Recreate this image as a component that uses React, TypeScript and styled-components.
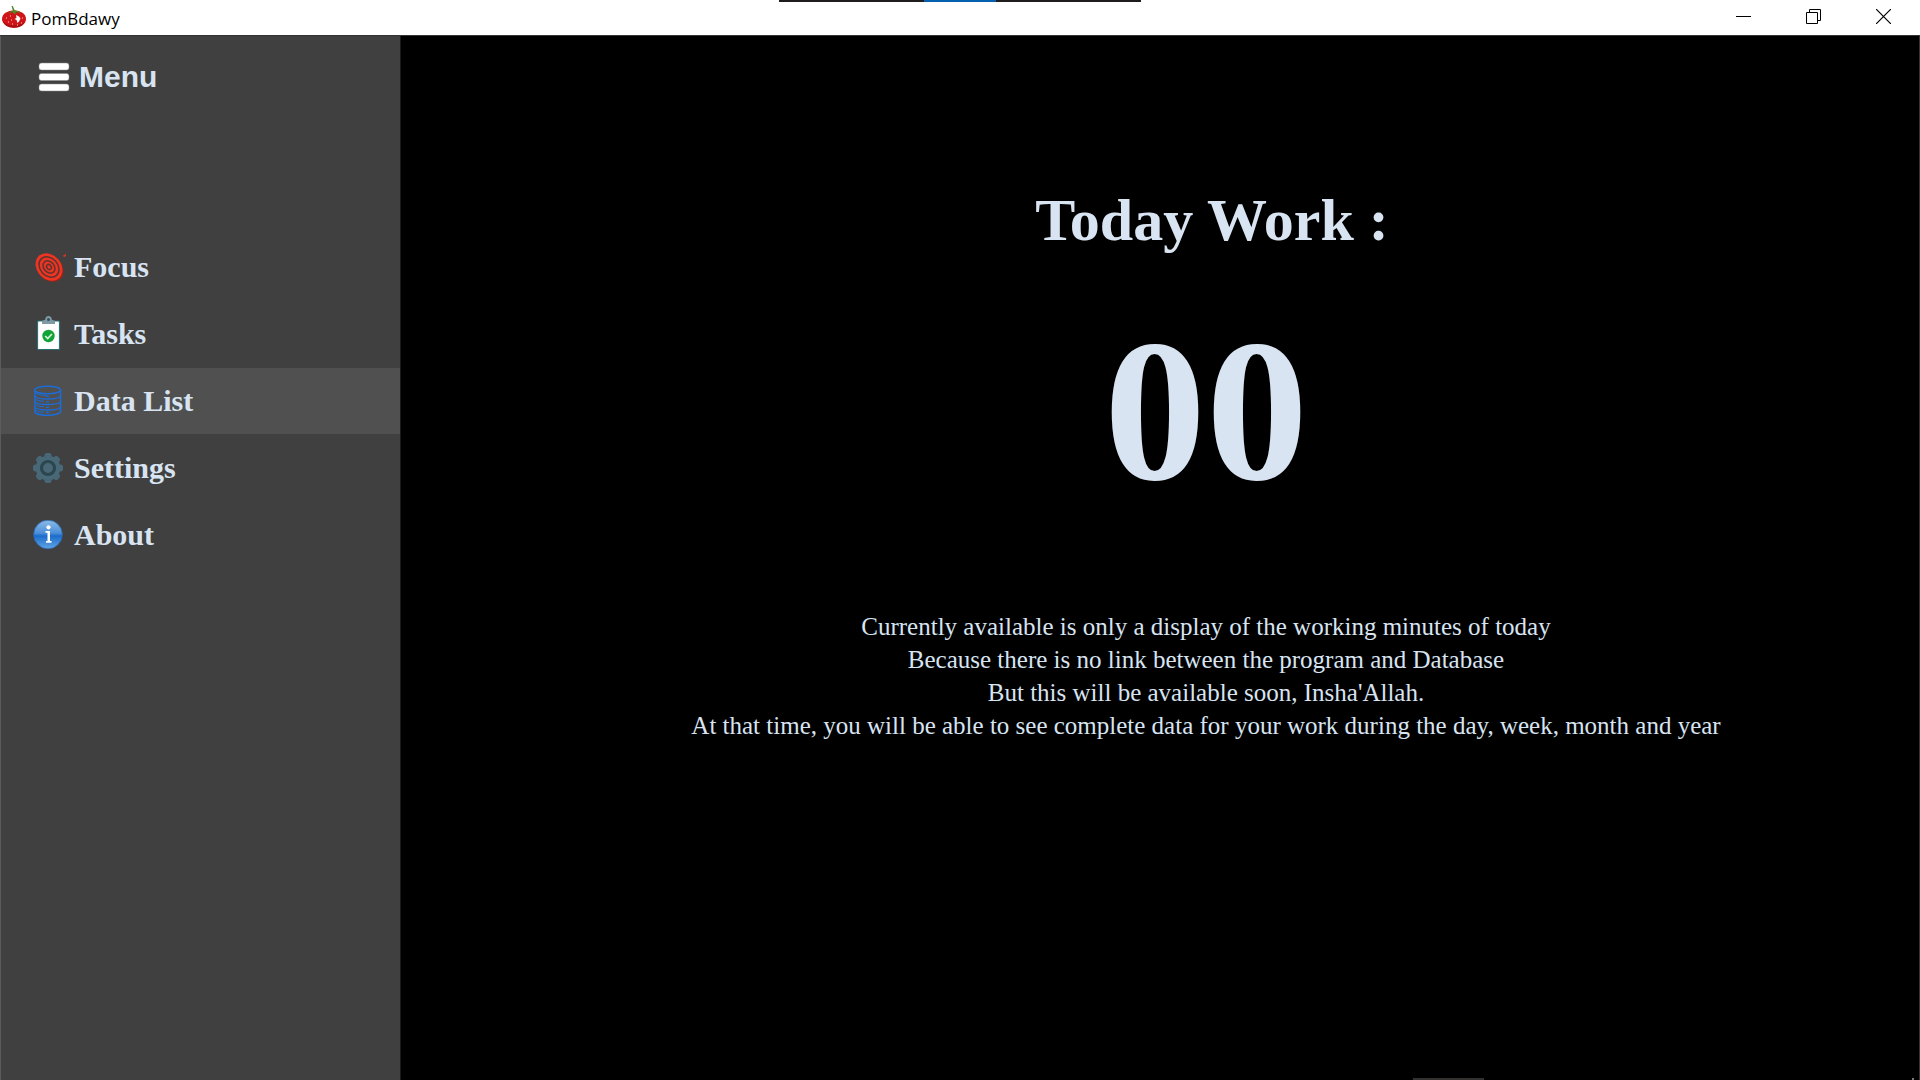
import React, { useState } from 'react';
import styled, { createGlobalStyle } from 'styled-components';

const serif = `"Palatino Linotype", Palatino, "Liberation Serif", serif`;
const ink = '#d8e4f1';

const GlobalStyle = createGlobalStyle`
  * { box-sizing: border-box; }
  body { margin: 0; background: #000; }
`;

const AppWindow = styled.div`
  position: relative;
  display: flex;
  flex-direction: column;
  min-height: 100vh;
  overflow: hidden;
  color: ${ink};
`;

const PlainButton = styled.button`
  display: flex;
  align-items: center;
  padding: 0;
  border: 0;
  background: none;
  color: inherit;
  cursor: pointer;
`;

const TitleBar = styled.header`
  display: flex;
  align-items: center;
  height: 35px;
  padding: 0 2px;
  background: #fff;
  color: #000;
`;

const AppName = styled.h1`
  flex: 1;
  margin: 0;
  padding: 2px 0 0 5px;
  font: 400 17px/32px "Segoe UI", "Open Sans", sans-serif;
`;

const WindowControl = styled(PlainButton)`
  justify-content: center;
  width: 70px;
  height: 33px;
  align-self: flex-start;
`;

const ScreenBar = styled.div`
  position: absolute;
  top: 0;
  left: 50%;
  display: flex;
  justify-content: center;
  width: 362px;
  height: 2px;
  margin-left: -181px;
  background: #1e1c1c;
`;

const ScreenBarAccent = styled.span`
  width: 72px;
  background: #0560b0;
`;

const Workspace = styled.div`
  display: flex;
  flex: 1;
  border-top: 1px solid #333;
`;

const Sidebar = styled.aside`
  flex: 0 0 401px;
  padding-top: 16px;
  background: #404040;
  border-left: 1px solid #5c5c5c;
  border-right: 1px solid #1c1c1c;
`;

const MenuToggle = styled(PlainButton)`
  gap: 8px;
  height: 50px;
  padding-left: 36px;
  font: 700 30px/50px Arial, "Liberation Sans", sans-serif;
`;

const Nav = styled.nav`
  display: flex;
  flex-direction: column;
  gap: 1px;
  margin-top: 132px;
`;

const NavItem = styled(PlainButton)<{ $active: boolean }>`
  gap: 8px;
  width: 100%;
  height: 66px;
  padding-left: 31px;
  font: 700 30px/40px ${serif};
  background: ${(p) => (p.$active ? '#505050' : 'transparent')};
`;

const Main = styled.main`
  display: flex;
  flex: 1;
  flex-direction: column;
  align-items: center;
  padding: 148px 0 0 92px;
  background: #000;
  border-right: 1px solid #333;
`;

const Heading = styled.h2`
  margin: 0;
  padding-left: 12px;
  font: 700 60px/72px ${serif};
`;

const Minutes = styled.output`
  margin-top: 54px;
  font: 700 204px/200px ${serif};
`;

const Notice = styled.p`
  margin: 100px 0 0;
  font: 400 25px/33px ${serif};
  text-align: center;
  white-space: pre-line;
`;

const EdgeMark = styled.span<{ $right: number; $width: number; $color: string }>`
  position: absolute;
  bottom: 0;
  right: ${(p) => p.$right}px;
  width: ${(p) => p.$width}px;
  height: 2px;
  background: ${(p) => p.$color};
`;

const TomatoIcon = () => (
  <svg width="24" height="24" viewBox="0 0 24 24" aria-hidden="true">
    <ellipse cx="12" cy="13" rx="12" ry="8.700" fill="#cf1519" />
    <path d="M1 16q10 7 22 0q-3 5.700-11 5.700T1 16" fill="#a80d12" />
    <path d="M6 7q3-2 5-2L9.500 0h1.300l2 4.500q3 0 6 2l-5-.3-1 2.300-2-2.200z" fill="#4d8b23" />
    <path d="M14 9l3 1.500 1.500 2-1.500 3-1.500 1.500-1-3-2-1 2-1z" fill="#fff" />
    <path d="M4 12h1M8 10h1M6 16h1M10 18h1M9 14h1M19 17h1M15 19h1M20 12h1" stroke="#ffc7c4" />
  </svg>
);

const BarsIcon = () => (
  <svg width="34" height="32" viewBox="0 0 34 32" aria-hidden="true">
    {[2, 12.5, 23].map((y) => (
      <rect key={y} x="2" y={y} width="30" height="7" rx="2.5" fill="#fff" stroke="#888" strokeWidth=".5" />
    ))}
  </svg>
);

const TargetIcon = () => (
  <svg width="34" height="32" viewBox="0 0 34 32" aria-hidden="true">
    <g transform="rotate(48 17 16)">
      <ellipse cx="18.500" cy="16" rx="15" ry="12" fill="#9c2318" />
      <ellipse cx="17" cy="16" rx="15" ry="12" fill="#ee3422" />
      <g fill="none" stroke="#5b3430" strokeWidth="1.500">
        <ellipse cx="17" cy="16" rx="11.300" ry="8.800" />
        <ellipse cx="17" cy="16" rx="6.800" ry="5.200" />
        <ellipse cx="17" cy="16" rx="2.700" ry="2.100" />
      </g>
    </g>
    <path d="M31.500 5.500l3-2" stroke="#d63125" strokeWidth="2" />
  </svg>
);

const ClipboardIcon = () => (
  <svg width="34" height="36" viewBox="0 0 34 36" aria-hidden="true">
    <rect x="5.500" y="5" width="22" height="28.500" rx="1" fill="#fff" stroke="#2c7076" strokeWidth="1.200" />
    <path d="M10 8V5.500q0-1.500 3-1.500 .5-4 3.500-4T20 4q3 0 3 1.500V8z" fill="#7f9aa5" />
    <circle cx="16.500" cy="3.500" r="1.500" fill="#354f58" />
    <circle cx="16.500" cy="20" r="6.200" fill="#10a437" />
    <path d="M13.200 20l2.500 2.500 4.200-4.500" fill="none" stroke="#d9f5dd" strokeWidth="1.700" />
  </svg>
);

const DatabaseIcon = () => (
  <svg width="34" height="34" viewBox="0 0 34 34" aria-hidden="true">
    <g fill="none" stroke="#1c6cd8" strokeWidth="1.500">
      <ellipse cx="15.700" cy="6" rx="12.800" ry="3.800" />
      <path d="M2.900 6v21.500c0 5 25.600 5 25.600 0V6" />
      <path d="M2.900 12c2 4 23.600 4 25.600 0M2.900 17.500c2 4 23.600 4 25.600 0M2.900 23c2 4 23.600 4 25.600 0" />
      <path d="M4 9.700q5 1.800 11 1.800M4 15.500q4 2 8 1.700M4 21q4 2 8 1.700M4 26.500q4 2 8 1.700" strokeWidth="1" />
      <path d="M14 12.500h3M14 17.800h3M14 23.300h3M14 28.300h3" strokeWidth="1.200" />
    </g>
  </svg>
);

const GearIcon = () => (
  <svg width="34" height="32" viewBox="0 0 34 32" aria-hidden="true">
    <g fill="#486878">
      {[0, 45, 90, 135].map((a) => (
        <rect key={a} x="12.500" y="1" width="7" height="30" rx="2.500" transform={`rotate(${a} 16 16)`} />
      ))}
      <circle cx="16" cy="16" r="12.300" />
    </g>
    <circle cx="16" cy="16" r="6.500" fill="#486878" stroke="#2c464e" strokeWidth="3.200" />
  </svg>
);

const InfoIcon = () => (
  <svg width="34" height="32" viewBox="0 0 34 32" aria-hidden="true">
    <defs>
      <linearGradient id="info-fill" x2="0" y2="1">
        <stop offset="0" stopColor="#8dbbe8" />
        <stop offset=".45" stopColor="#4b8fd8" />
        <stop offset=".55" stopColor="#1a6ccb" />
        <stop offset="1" stopColor="#63a5e5" />
      </linearGradient>
    </defs>
    <circle cx="16" cy="15.500" r="14.300" fill="url(#info-fill)" stroke="#2b6bb4" strokeWidth=".8" />
    <circle cx="16.500" cy="8.300" r="2.100" fill="#fff" />
    <path d="M13.500 12h4.500v10h1.500v1.800h-5.500v-1.800h1.500v-8.200h-2z" fill="#fff" />
  </svg>
);

const items = [
  { label: 'Focus', Icon: TargetIcon },
  { label: 'Tasks', Icon: ClipboardIcon },
  { label: 'Data List', Icon: DatabaseIcon },
  { label: 'Settings', Icon: GearIcon },
  { label: 'About', Icon: InfoIcon },
];

const notice = `Currently available is only a display of the working minutes of today
Because there is no link between the program and Database
But this will be available soon, Insha'Allah.
At that time, you will be able to see complete data for your work during the day, week, month and year`;

export default function App() {
  const [active, setActive] = useState('Data List');
  return (
    <AppWindow>
      <GlobalStyle />
      <TitleBar>
        <TomatoIcon />
        <AppName>PomBdawy</AppName>
        <WindowControl aria-label="Minimize">
          <svg width="15" height="15" viewBox="0 0 15 15"><path d="M0 7.500h15" stroke="#000" /></svg>
        </WindowControl>
        <WindowControl aria-label="Restore">
          <svg width="15" height="15" viewBox="0 0 15 15" fill="none" stroke="#000">
            <path d="M.5 3.500h11v11H.5zM3.500 3.500v-3h11v11h-3" />
          </svg>
        </WindowControl>
        <WindowControl aria-label="Close">
          <svg width="15" height="15" viewBox="0 0 15 15"><path d="M0 0l15 15M15 0L0 15" stroke="#000" strokeWidth="1.200" /></svg>
        </WindowControl>
      </TitleBar>
      <Workspace>
        <Sidebar>
          <MenuToggle><BarsIcon />Menu</MenuToggle>
          <Nav>
            {items.map(({ label, Icon }) => (
              <NavItem key={label} $active={label === active} onClick={() => setActive(label)}>
                <Icon />{label}
              </NavItem>
            ))}
          </Nav>
        </Sidebar>
        <Main>
          <Heading>Today Work :</Heading>
          <Minutes>00</Minutes>
          <Notice>{notice}</Notice>
        </Main>
      </Workspace>
      <ScreenBar><ScreenBarAccent /></ScreenBar>
      <EdgeMark $right={436} $width={71} $color="#333030" />
      <EdgeMark $right={6} $width={2} $color="#777" />
    </AppWindow>
  );
}
